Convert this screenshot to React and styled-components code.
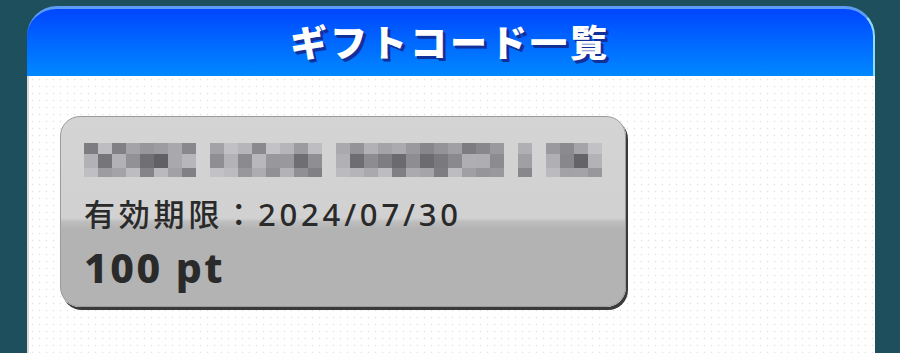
import React from "react";
import styled, { createGlobalStyle } from "styled-components";

const GlobalStyle = createGlobalStyle`
  html, body {
    margin: 0;
    padding: 0;
    background: #1d4f5c;
    height: 100%;
    overflow: hidden;
  }
  #root {
    height: 100%;
  }
`;

const Page = styled.div`
  height: 100%;
  box-sizing: border-box;
  padding: 6px 0 0 27px;
  font-family: "Noto Sans", "Noto Sans CJK JP", sans-serif;
`;

const Panel = styled.div`
  width: 848px;
  height: 100%;
  display: flex;
  flex-direction: column;
`;

const Header = styled.div`
  height: 70px;
  box-sizing: border-box;
  border-radius: 30px 30px 0 0;
  border-top: 3px solid #5c9cf4;
  border-right: 2px solid #8fdcff;
  background: linear-gradient(#0046ff 0%, #0068ff 50%, #0088ff 100%);
  display: flex;
  align-items: center;
  justify-content: center;
`;

const Title = styled.h1`
  margin: 0 0 4px 0;
  font-family: "Noto Sans CJK JP", sans-serif;
  font-weight: 900;
  font-size: 37px;
  letter-spacing: 3px;
  color: #ffffff;
  text-shadow: 3px 3px 0 #12309a, 2px 2px 0 #12309a;
`;

const Body = styled.div`
  flex: 1;
  border-left: 2px solid #d9d9d9;
  background-color: #ffffff;
  background-image: radial-gradient(#e4e4e4 0.7px, transparent 1.1px);
  background-size: 7px 7px;
  padding: 40px 0 0 31px;
`;

const Card = styled.div`
  width: 566px;
  height: 191px;
  box-sizing: border-box;
  border-radius: 20px;
  border: 1px solid #9a9a9a;
  box-shadow: 2px 3px 0 0 #3a3a3a;
  background: linear-gradient(
    #d4d4d4 0px,
    #d1d1d1 101px,
    #bdbdbd 105px,
    #b3b3b3 112px,
    #b3b3b3 100%
  );
  padding: 26px 0 0 23px;
  display: flex;
  flex-direction: column;
`;

const Mosaic = styled.div`
  display: flex;
  flex-direction: column;
  width: 518px;
`;

const MosaicRow = styled.div`
  display: flex;
  height: ${(p) => p.$h}px;
`;

const Block = styled.div`
  width: 14px;
  height: 100%;
  background: ${(p) => p.$shade};
`;

const Expiry = styled.div`
  margin-top: 18px;
  font-family: "Noto Sans", "Noto Sans CJK JP", sans-serif;
  font-weight: 500;
  font-size: 31px;
  letter-spacing: 3.8px;
  line-height: 38px;
  color: #2a2a2a;
`;

const Points = styled.div`
  margin-top: 12px;
  font-family: "Noto Sans", "Noto Sans CJK JP", sans-serif;
  font-weight: 800;
  font-size: 41px;
  letter-spacing: 2.5px;
  line-height: 44px;
  color: #2a2a2a;
`;

const gaps = [8, 17, 30, 32];
const rowHeights = [11, 14, 9];

function shadeFor(row, col) {
  let v = Math.sin(row * 97.13 + col * 12.9898) * 43758.5453;
  v = v - Math.floor(v);
  const base = row === 1 ? 95 : 125;
  const span = row === 1 ? 90 : 70;
  const g = Math.round(base + v * span);
  return `rgb(${g}, ${g}, ${g + 4})`;
}

function CodeMosaic() {
  return (
    <Mosaic>
      {rowHeights.map((h, r) => (
        <MosaicRow key={r} $h={h}>
          {Array.from({ length: 37 }).map((_, c) => (
            <Block
              key={c}
              $shade={gaps.includes(c) ? "transparent" : shadeFor(r, c)}
            />
          ))}
        </MosaicRow>
      ))}
    </Mosaic>
  );
}

export default function App() {
  return (
    <>
      <GlobalStyle />
      <Page>
        <Panel>
          <Header>
            <Title>ギフトコード一覧</Title>
          </Header>
          <Body>
            <Card>
              <CodeMosaic />
              <Expiry>有効期限：2024/07/30</Expiry>
              <Points>100 pt</Points>
            </Card>
          </Body>
        </Panel>
      </Page>
    </>
  );
}
